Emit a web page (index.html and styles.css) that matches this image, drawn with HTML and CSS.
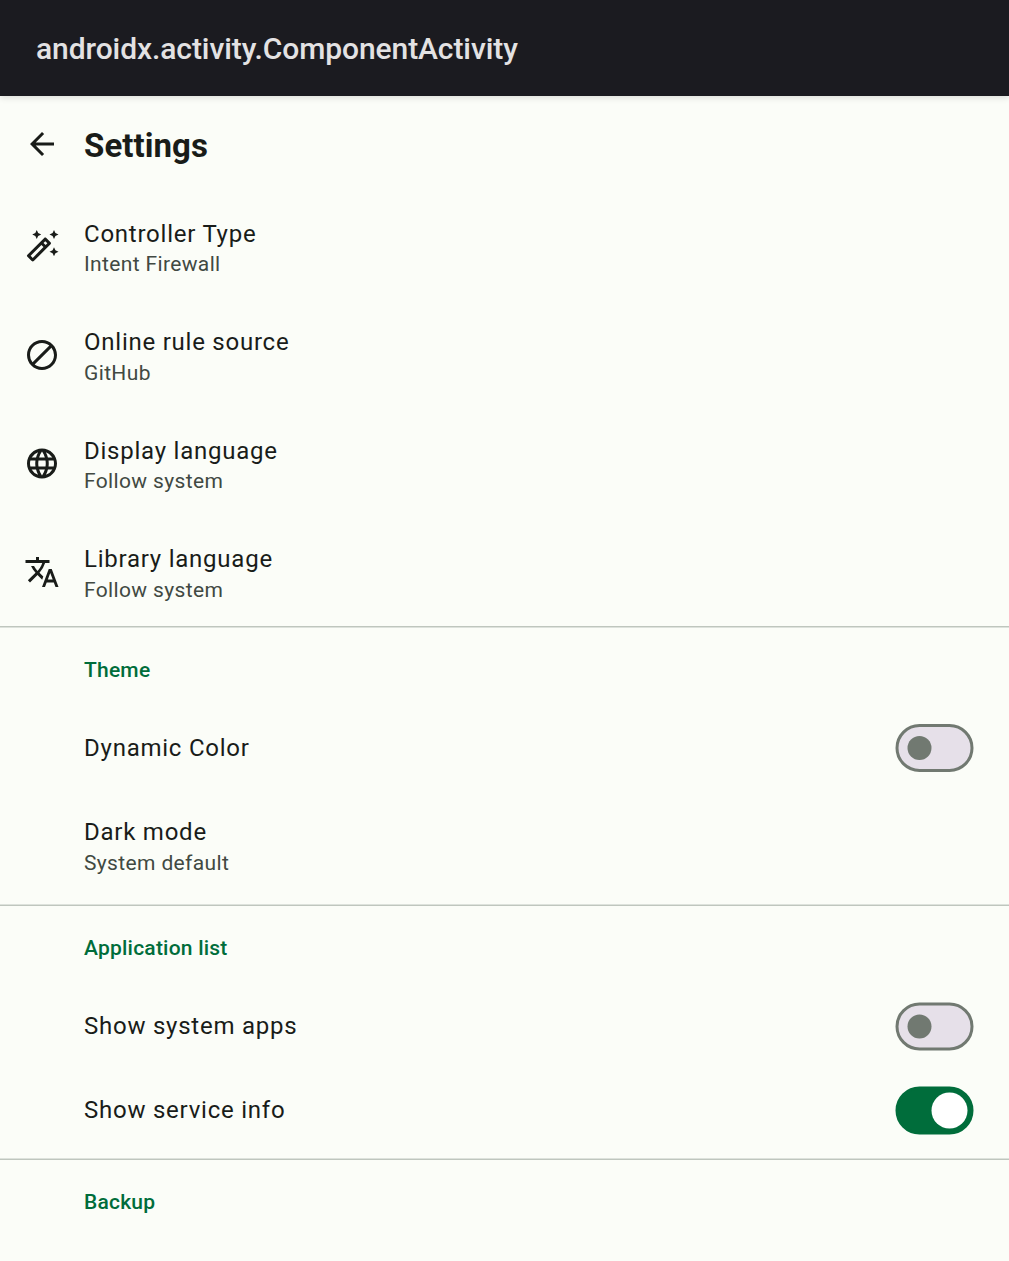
FILE: index.html
```html
<!DOCTYPE html>
<html lang="en">
<head>
<meta charset="utf-8">
<title>Settings</title>
<link rel="stylesheet" href="styles.css">
</head>
<body>
<header class="actionbar">androidx.activity.ComponentActivity</header>
<main>
<div class="topbar">
<svg class="icon" viewBox="0 0 24 24"><path d="M20 11H7.83l5.59-5.59L12 4l-8 8 8 8 1.41-1.41L7.83 13H20v-2z"/></svg>
<h1>Settings</h1>
</div>
<section class="items">
<div class="item">
<svg class="icon" viewBox="0 -.33 24 24"><path d="M20 7l.94-2.06L23 4l-2.06-.94L20 1l-.94 2.06L17 4l2.06.94zM8.5 7l.94-2.06L11.5 4l-2.06-.94L8.500 1l-.94 2.060L5.500 4l2.060.940zM20 12.500l-.940 2.060L17 15.500l2.060.940L20 18.500l.940-2.060L23 15.500l-2.060-.940zM17.710 9.120l-2.830-2.830C14.680 6.100 14.430 6 14.170 6s-.510.100-.710.290L2.290 17.460a.996.996 0 0 0 0 1.410l2.830 2.830c.200.200.450.300.710.300s.510-.100.710-.290l11.170-11.170c.390-.390.390-1.030 0-1.420zM14.170 8.420l1.410 1.410L14.410 11 13 9.590l1.170-1.170zM5.830 19.590l-1.410-1.410L11.590 11 13 12.410l-7.170 7.180z"/></svg>
<div class="text"><div class="title">Controller Type</div><div class="sub">Intent Firewall</div></div>
</div>
<div class="item">
<svg class="icon" viewBox="0 0 24 24"><path d="M12 2C6.480 2 2 6.480 2 12s4.480 10 10 10 10-4.480 10-10S17.520 2 12 2zM4 12c0-4.420 3.580-8 8-8 1.850 0 3.550.630 4.900 1.690L5.690 16.900A7.902 7.902 0 0 1 4 12zm8 8c-1.850 0-3.550-.630-4.900-1.690L18.310 7.100A7.902 7.902 0 0 1 20 12c0 4.420-3.580 8-8 8z"/></svg>
<div class="text"><div class="title">Online rule source</div><div class="sub">GitHub</div></div>
</div>
<div class="item">
<svg class="icon" viewBox="0 -.33 24 24"><path d="M11.990 2C6.470 2 2 6.480 2 12s4.470 10 9.990 10C17.520 22 22 17.520 22 12S17.520 2 11.990 2zm6.930 6h-2.950a15.650 15.650 0 0 0-1.380-3.560A8.030 8.030 0 0 1 18.920 8zM12 4.040c.830 1.200 1.480 2.530 1.910 3.960h-3.820c.430-1.430 1.080-2.760 1.910-3.960zM4.260 14C4.100 13.360 4 12.690 4 12s.100-1.360.260-2h3.380c-.080.660-.140 1.320-.140 2s.060 1.340.140 2H4.260zm.820 2h2.950c.320 1.250.780 2.450 1.380 3.560A7.987 7.987 0 0 1 5.080 16zm2.950-8H5.080a7.987 7.987 0 0 1 4.330-3.560A15.650 15.650 0 0 0 8.030 8zM12 19.960c-.830-1.200-1.480-2.530-1.910-3.960h3.820c-.430 1.430-1.080 2.760-1.910 3.960zM14.340 14H9.660c-.090-.660-.160-1.320-.160-2s.070-1.350.160-2h4.680c.090.650.160 1.320.160 2s-.070 1.340-.160 2zm.250 5.560c.600-1.110 1.060-2.310 1.380-3.560h2.950a8.030 8.030 0 0 1-4.330 3.560zM16.360 14c.080-.660.140-1.320.140-2s-.060-1.340-.140-2h3.380c.160.640.260 1.310.260 2s-.100 1.360-.260 2h-3.380z"/></svg>
<div class="text"><div class="title">Display language</div><div class="sub">Follow system</div></div>
</div>
<div class="item">
<svg class="icon" viewBox="0 0 24 24"><path d="M12.870 15.070l-2.540-2.510.030-.030A17.520 17.520 0 0 0 14.070 6H17V4h-7V2H8v2H1v1.990h11.170C11.500 7.920 10.440 9.750 9 11.350 8.070 10.320 7.300 9.190 6.690 8h-2c.730 1.630 1.730 3.170 2.980 4.560l-5.090 5.020L4 19l5-5 3.110 3.110.760-2.040zM18.500 10h-2L12 22h2l1.120-3h4.750L21 22h2l-4.500-12zm-2.620 7l1.620-4.330L19.120 17h-3.240z"/></svg>
<div class="text"><div class="title">Library language</div><div class="sub">Follow system</div></div>
</div>
</section>
<section class="group">
<h2>Theme</h2>
<div class="row"><div class="title">Dynamic Color</div><svg class="switch" viewBox="-.5 0 79 48"><rect x="1.5" y="1.500" width="75" height="45" rx="22.500"/><circle cx="24" cy="24" r="12"/></svg></div>
<div class="row two"><div class="text"><div class="title">Dark mode</div><div class="sub">System default</div></div></div>
</section>
<section class="group late">
<h2>Application list</h2>
<div class="row"><div class="title">Show system apps</div><svg class="switch" viewBox="-.5 -.5 79 48"><rect x="1.5" y="1.500" width="75" height="45" rx="22.500"/><circle cx="24" cy="24" r="12"/></svg></div>
<div class="row"><div class="title">Show service info</div><svg class="switch on" viewBox="-.5 -.5 79 48"><rect x="1.5" y="1.500" width="75" height="45" rx="22.500"/><circle cx="54" cy="24" r="18"/></svg></div>
</section>
<section class="group late last">
<h2>Backup</h2>
</section>
</main>
</body>
</html>
```
FILE: styles.css
```css
* { box-sizing: border-box; }
body {
  margin: 0;
  height: 1261px;
  overflow: hidden;
  background: #fbfdf8;
  color: #191c19;
  font-family: Roboto, sans-serif;
}
.actionbar {
  height: 96px;
  padding-left: 36px;
  background: #1b1b20;
  color: #e3e2e3;
  font-size: 30px;
  font-weight: 500;
  line-height: 98px;
  letter-spacing: -.08px;
  box-shadow: 0 2px 6px rgba(0, 0, 0, .12);
}
.topbar {
  display: flex;
  align-items: center;
  height: 96px;
  padding-left: 24px;
  gap: 24px;
}
.icon {
  flex: none;
  width: 36px;
  height: 36px;
  fill: #191c19;
}
h1, h2 { margin: 0; }
h1 {
  font-size: 33px;
  font-weight: 700;
  line-height: 42px;
  letter-spacing: .06px;
  padding-top: 4px;
}
.item {
  display: flex;
  align-items: center;
  gap: 24px;
  height: 108.5px;
  padding-left: 24px;
}
.title {
  font-size: 24px;
  line-height: 36px;
  letter-spacing: .76px;
}
.sub {
  margin-top: .5px;
  color: #414942;
  font-size: 21px;
  line-height: 25px;
  letter-spacing: .36px;
}
.item .text { padding-top: .5px; }
.group {
  padding-top: 2px;
  background: linear-gradient(#bfc6be 1px, #dde2dc 1px, #dde2dc 2px, transparent 2px) no-repeat;
}
.late {
  background: linear-gradient(#dde2dc 1px, #bfc6be 1px, #bfc6be 2px, transparent 2px) no-repeat;
}
.last { margin-top: 6px; }
h2 {
  height: 78px;
  padding: 27px 0 0 84px;
  color: #006d3b;
  font-size: 21px;
  font-weight: 500;
  line-height: 30px;
  letter-spacing: .22px;
}
.row {
  display: flex;
  align-items: center;
  justify-content: space-between;
  height: 84px;
  padding: 0 35px 0 84px;
}
.two {
  align-items: flex-start;
  height: 114px;
  padding-top: 24px;
}
.switch {
  flex: none;
  width: 79px;
  height: 48px;
  overflow: visible;
}
.switch rect {
  fill: #e6e0e9;
  stroke: #717971;
  stroke-width: 3px;
}
.switch circle { fill: #717971; }
.on rect {
  fill: #006d3b;
  stroke: #006d3b;
}
.on circle { fill: #fff; }
```
